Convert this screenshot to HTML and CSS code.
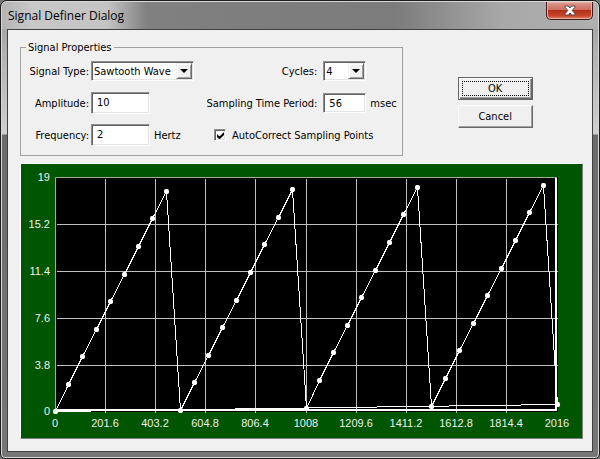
FILE: index.html
```html
<!DOCTYPE html>
<html lang="en">
<head>
    <meta charset="UTF-8">
    <meta name="viewport" content="width=device-width, initial-scale=1.0">
    <title>Signal Definer Dialog</title>
    <link rel="stylesheet" href="styles.css">
</head>
<body>
    <div class="dialog">
        <!-- Title Bar -->
        <header class="title-bar">
            <h1 class="title">Signal Definer Dialog</h1>
            <button class="close-button" type="button" aria-label="Close">
                <svg width="12" height="11" viewBox="0 0 12 11">
                    <path d="M1 1h3.400L6 3l1.600-2H11v1.200L8.200 5.500 11 8.800V10H7.600L6 8l-1.600 2H1V8.800l2.800-3.300L1 2.200z" fill="#fff" stroke="#5c4548" stroke-width="1"/>
                </svg>
            </button>
        </header>

        <form class="client">
            <div class="top-row">
                <!-- Signal Properties -->
                <fieldset class="properties">
                    <legend>Signal Properties</legend>
                    <div class="fields">
                        <label for="signal-type">Signal Type:</label>
                        <div class="combo">
                            <select id="signal-type">
                                <option>Sawtooth Wave</option>
                                <option>Sine Wave</option>
                                <option>Square Wave</option>
                            </select>
                            <span class="combo-arrow"></span>
                        </div>
                        <label class="right-label" for="cycles">Cycles:</label>
                        <div class="field">
                            <div class="combo small">
                                <select id="cycles">
                                    <option>1</option>
                                    <option>2</option>
                                    <option selected>4</option>
                                </select>
                                <span class="combo-arrow"></span>
                            </div>
                        </div>

                        <label for="amplitude">Amplitude:</label>
                        <div class="field">
                            <input class="text-box" id="amplitude" type="text" value="10">
                        </div>
                        <label class="right-label" for="period">Sampling Time Period:</label>
                        <div class="field">
                            <input class="text-box small" id="period" type="text" value="56">
                            <span>msec</span>
                        </div>

                        <label for="frequency">Frequency:</label>
                        <div class="field">
                            <input class="text-box" id="frequency" type="text" value="2">
                            <span>Hertz</span>
                        </div>
                        <label class="check" for="auto-correct">
                            <input id="auto-correct" type="checkbox" checked>
                            <svg class="tick" width="7" height="7" viewBox="0 0 7 7">
                                <path d="M0 2v3l2 2h1l4-4V0L3 4H2z" fill="#000"/>
                            </svg>
                            <span>AutoCorrect Sampling Points</span>
                        </label>
                    </div>
                </fieldset>

                <!-- Buttons -->
                <div class="buttons">
                    <button class="button default" type="button"><span>OK</span></button>
                    <button class="button" type="button"><span>Cancel</span></button>
                </div>
            </div>

            <!-- Chart -->
            <svg class="chart" viewBox="0 0 561 274" role="img" aria-label="Signal preview">
                <defs>
                    <marker id="dot" markerUnits="userSpaceOnUse" markerWidth="6" markerHeight="6" refX="3" refY="3">
                        <circle cx="3" cy="3" r="2.600" fill="#fff"/>
                    </marker>
                </defs>
                <rect class="plot" x="34" y="13" width="503" height="235"/>
                <path class="grid" d="M84 14v234M134 14v234M184 14v234M234 14v234M285 14v234M335 14v234M385 14v234M435 14v234M485 14v234M35 60h501M35 107h501M35 154h501M35 201h501" transform="translate(.5 .5)"/>
                <path class="edge-dark" d="M34.500 248V13.500H536"/>
                <path class="edge-light" d="M35 246h500V14"/>
                <path class="signal" transform="translate(.5 .5)" d="M34 247L47 220 61 192 75 165 89 137 103 110 117 82 131 54 145 27 159 246 173 218 187 191 201 163 215 136 229 108 243 80 257 53 271 25 285 244 298 216 312 188 326 161 340 133 354 106 368 78 382 50 396 23 410 242 424 214 438 186 452 159 466 131 480 104 494 76 508 48 522 21 536 240z"/>
                <g class="y-labels">
                    <text x="29" y="17">19</text>
                    <text x="29" y="64">15.2</text>
                    <text x="29" y="111">11.4</text>
                    <text x="29" y="158">7.6</text>
                    <text x="29" y="205">3.8</text>
                    <text x="29" y="251">0</text>
                </g>
                <g class="x-labels">
                    <text x="34" y="263">0</text>
                    <text x="84" y="263">201.6</text>
                    <text x="134" y="263">403.2</text>
                    <text x="184" y="263">604.8</text>
                    <text x="234" y="263">806.4</text>
                    <text x="285" y="263">1008</text>
                    <text x="335" y="263">1209.6</text>
                    <text x="385" y="263">1411.2</text>
                    <text x="435" y="263">1612.8</text>
                    <text x="485" y="263">1814.4</text>
                    <text x="536" y="263">2016</text>
                </g>
            </svg>
        </form>
    </div>
</body>
</html>
```
FILE: styles.css
```css
* {
    box-sizing: border-box;
}
body {
    margin: 0;
    background-color: #777;
    font-family: Tahoma, "DejaVu Sans Condensed", "Noto Sans", sans-serif;
    font-size: 11px;
    line-height: 13px;
    color: #000;
}
.dialog {
    min-height: 100vh;
    padding: 0 6px 6px;
    border: 1px solid #1c1c1c;
    border-radius: 7px 7px 5px 5px;
    box-shadow: inset 0 0 0 1px #d8d8d8;
    background: linear-gradient(#8c8c8c 0, #a8a8a8 30px, #d0d0d0 133px, #6c6c6c 134px, #777 100%);
    display: flex;
    flex-direction: column;
}
.title-bar {
    height: 28px;
    margin: 0 -5px;
    padding: 0 5px 0 6px;
    display: flex;
    justify-content: space-between;
    align-items: flex-start;
    background: linear-gradient(90deg, #b4b4b4 0, #c8c8c8 30px, #c4c4c4 105px, #808080 145px, #7c7c7c 66%, #a8a8a8 84%, #b0b0b0 100%);
    border-top: 1px solid #d8d8d8;
    border-radius: 6px 6px 0 0;
}
.title {
    margin: 0;
    font-family: "Open Sans", "Noto Sans", sans-serif;
    font-size: 12px;
    font-weight: normal;
    line-height: 28px;
}
.close-button {
    width: 47px;
    height: 18px;
    padding: 0;
    display: flex;
    justify-content: center;
    align-items: center;
    border: 1px solid #40191a;
    border-top: none;
    border-radius: 0 0 5px 5px;
    background: linear-gradient(#dc9c90 0, #cf6f60 45%, #b42f1c 50%, #c8452a 80%, #e08060 100%);
    box-shadow: inset 0 0 0 1px #e8b0a4;
}
.client {
    flex: 1;
    padding: 11px 9px 11px 12px;
    background-color: #f0f0f0;
    border: 1px solid #404040;
    display: flex;
    flex-direction: column;
    gap: 7px;
}
.top-row {
    display: flex;
}
.properties {
    flex: 15;
    min-width: 0;
    margin: 0;
    padding: 6px 2px 9px 3px;
    border: 1px solid #a0a0a0;
}
.properties legend {
    margin-left: 2px;
    padding: 0 2px;
}
.fields {
    display: grid;
    grid-template-columns: 65px 103px 1fr 77px;
    grid-auto-rows: 22px;
    gap: 10px 2px;
    align-items: center;
}
.fields > label {
    text-align: right;
    white-space: nowrap;
}
.fields > .right-label {
    padding-right: 4px;
}
.field {
    display: flex;
    align-items: center;
    gap: 4px;
}
.text-box,
.combo select {
    font: inherit;
    color: #000;
    background-color: #fff;
    border: 1px solid;
    border-color: #909090 #fff #fff #909090;
    border-radius: 0;
    box-shadow: inset 1px 1px #606060, inset -1px -1px #e3e3e3;
    outline: none;
}
.text-box {
    width: 59px;
    height: 22px;
    padding: 0 5px 2px;
}
.text-box.small {
    width: 43px;
    height: 20px;
    padding-bottom: 0;
}
.combo {
    position: relative;
    width: 103px;
    height: 20px;
}
.combo.small {
    width: 43px;
}
.combo select {
    width: 100%;
    height: 20px;
    padding: 0 2px;
    appearance: none;
}
.combo-arrow {
    position: absolute;
    top: 2px;
    right: 2px;
    width: 16px;
    height: 16px;
    display: flex;
    justify-content: center;
    align-items: center;
    background-color: #f0f0f0;
    border: 1px solid;
    border-color: #f0f0f0 #696969 #696969 #f0f0f0;
    box-shadow: inset 1px 1px #fff, inset -1px -1px #a0a0a0;
    pointer-events: none;
}
.combo-arrow::before {
    content: "";
    border: 4px solid transparent;
    border-top-color: #000;
    border-bottom: none;
}
.fields > .check {
    grid-column: 3 / 5;
    margin-left: 18px;
    display: flex;
    align-items: center;
    gap: 6px;
    position: relative;
}
.check input {
    appearance: none;
    width: 12px;
    height: 12px;
    margin: 0;
    background-color: #fff;
    border: 1px solid;
    border-color: #909090 #fff #fff #909090;
    box-shadow: inset 1px 1px #606060, inset -1px -1px #e3e3e3;
}
.tick {
    position: absolute;
    left: 3px;
    top: 3px;
    visibility: hidden;
}
.check input:checked + .tick {
    visibility: visible;
}
.buttons {
    flex: 7;
    padding: 36px 0 0 4px;
    display: flex;
    flex-direction: column;
    align-items: center;
    gap: 5px;
}
.button {
    width: 75px;
    height: 23px;
    padding: 2px;
    font: inherit;
    color: #000;
    background-color: #f0f0f0;
    border: 1px solid;
    border-color: #fff #696969 #696969 #fff;
    border-radius: 0;
    box-shadow: inset -1px -1px #a0a0a0;
}
.button span {
    height: 100%;
    display: flex;
    justify-content: center;
    align-items: center;
}
.button.default {
    border-color: #646464;
    box-shadow: inset 1px 1px #fff, inset -1px -1px #696969, inset -2px -2px #a0a0a0;
    padding: 3px;
}
.button.default span {
    border: 1px dotted #000;
}
.chart {
    width: 100%;
    height: auto;
    background-color: #005500;
    border: 1px solid;
    border-color: #fff #808080 #808080 #fff;
    font-family: "Liberation Sans", Arial, sans-serif;
    font-size: 11px;
}
.plot {
    fill: #000;
}
.grid {
    fill: none;
    stroke: #c0c0c0;
    shape-rendering: crispEdges;
}
.edge-dark {
    fill: none;
    stroke: #a0a8a0;
}
.edge-light {
    fill: none;
    stroke: #fff;
    stroke-width: 2;
    shape-rendering: crispEdges;
}
.signal {
    fill: none;
    stroke: #fff;
    shape-rendering: crispEdges;
    marker-start: url(#dot);
    marker-mid: url(#dot);
}
.y-labels text {
    fill: #f0f0f0;
    text-anchor: end;
}
.x-labels text {
    fill: #f0f0f0;
    text-anchor: middle;
}
```
